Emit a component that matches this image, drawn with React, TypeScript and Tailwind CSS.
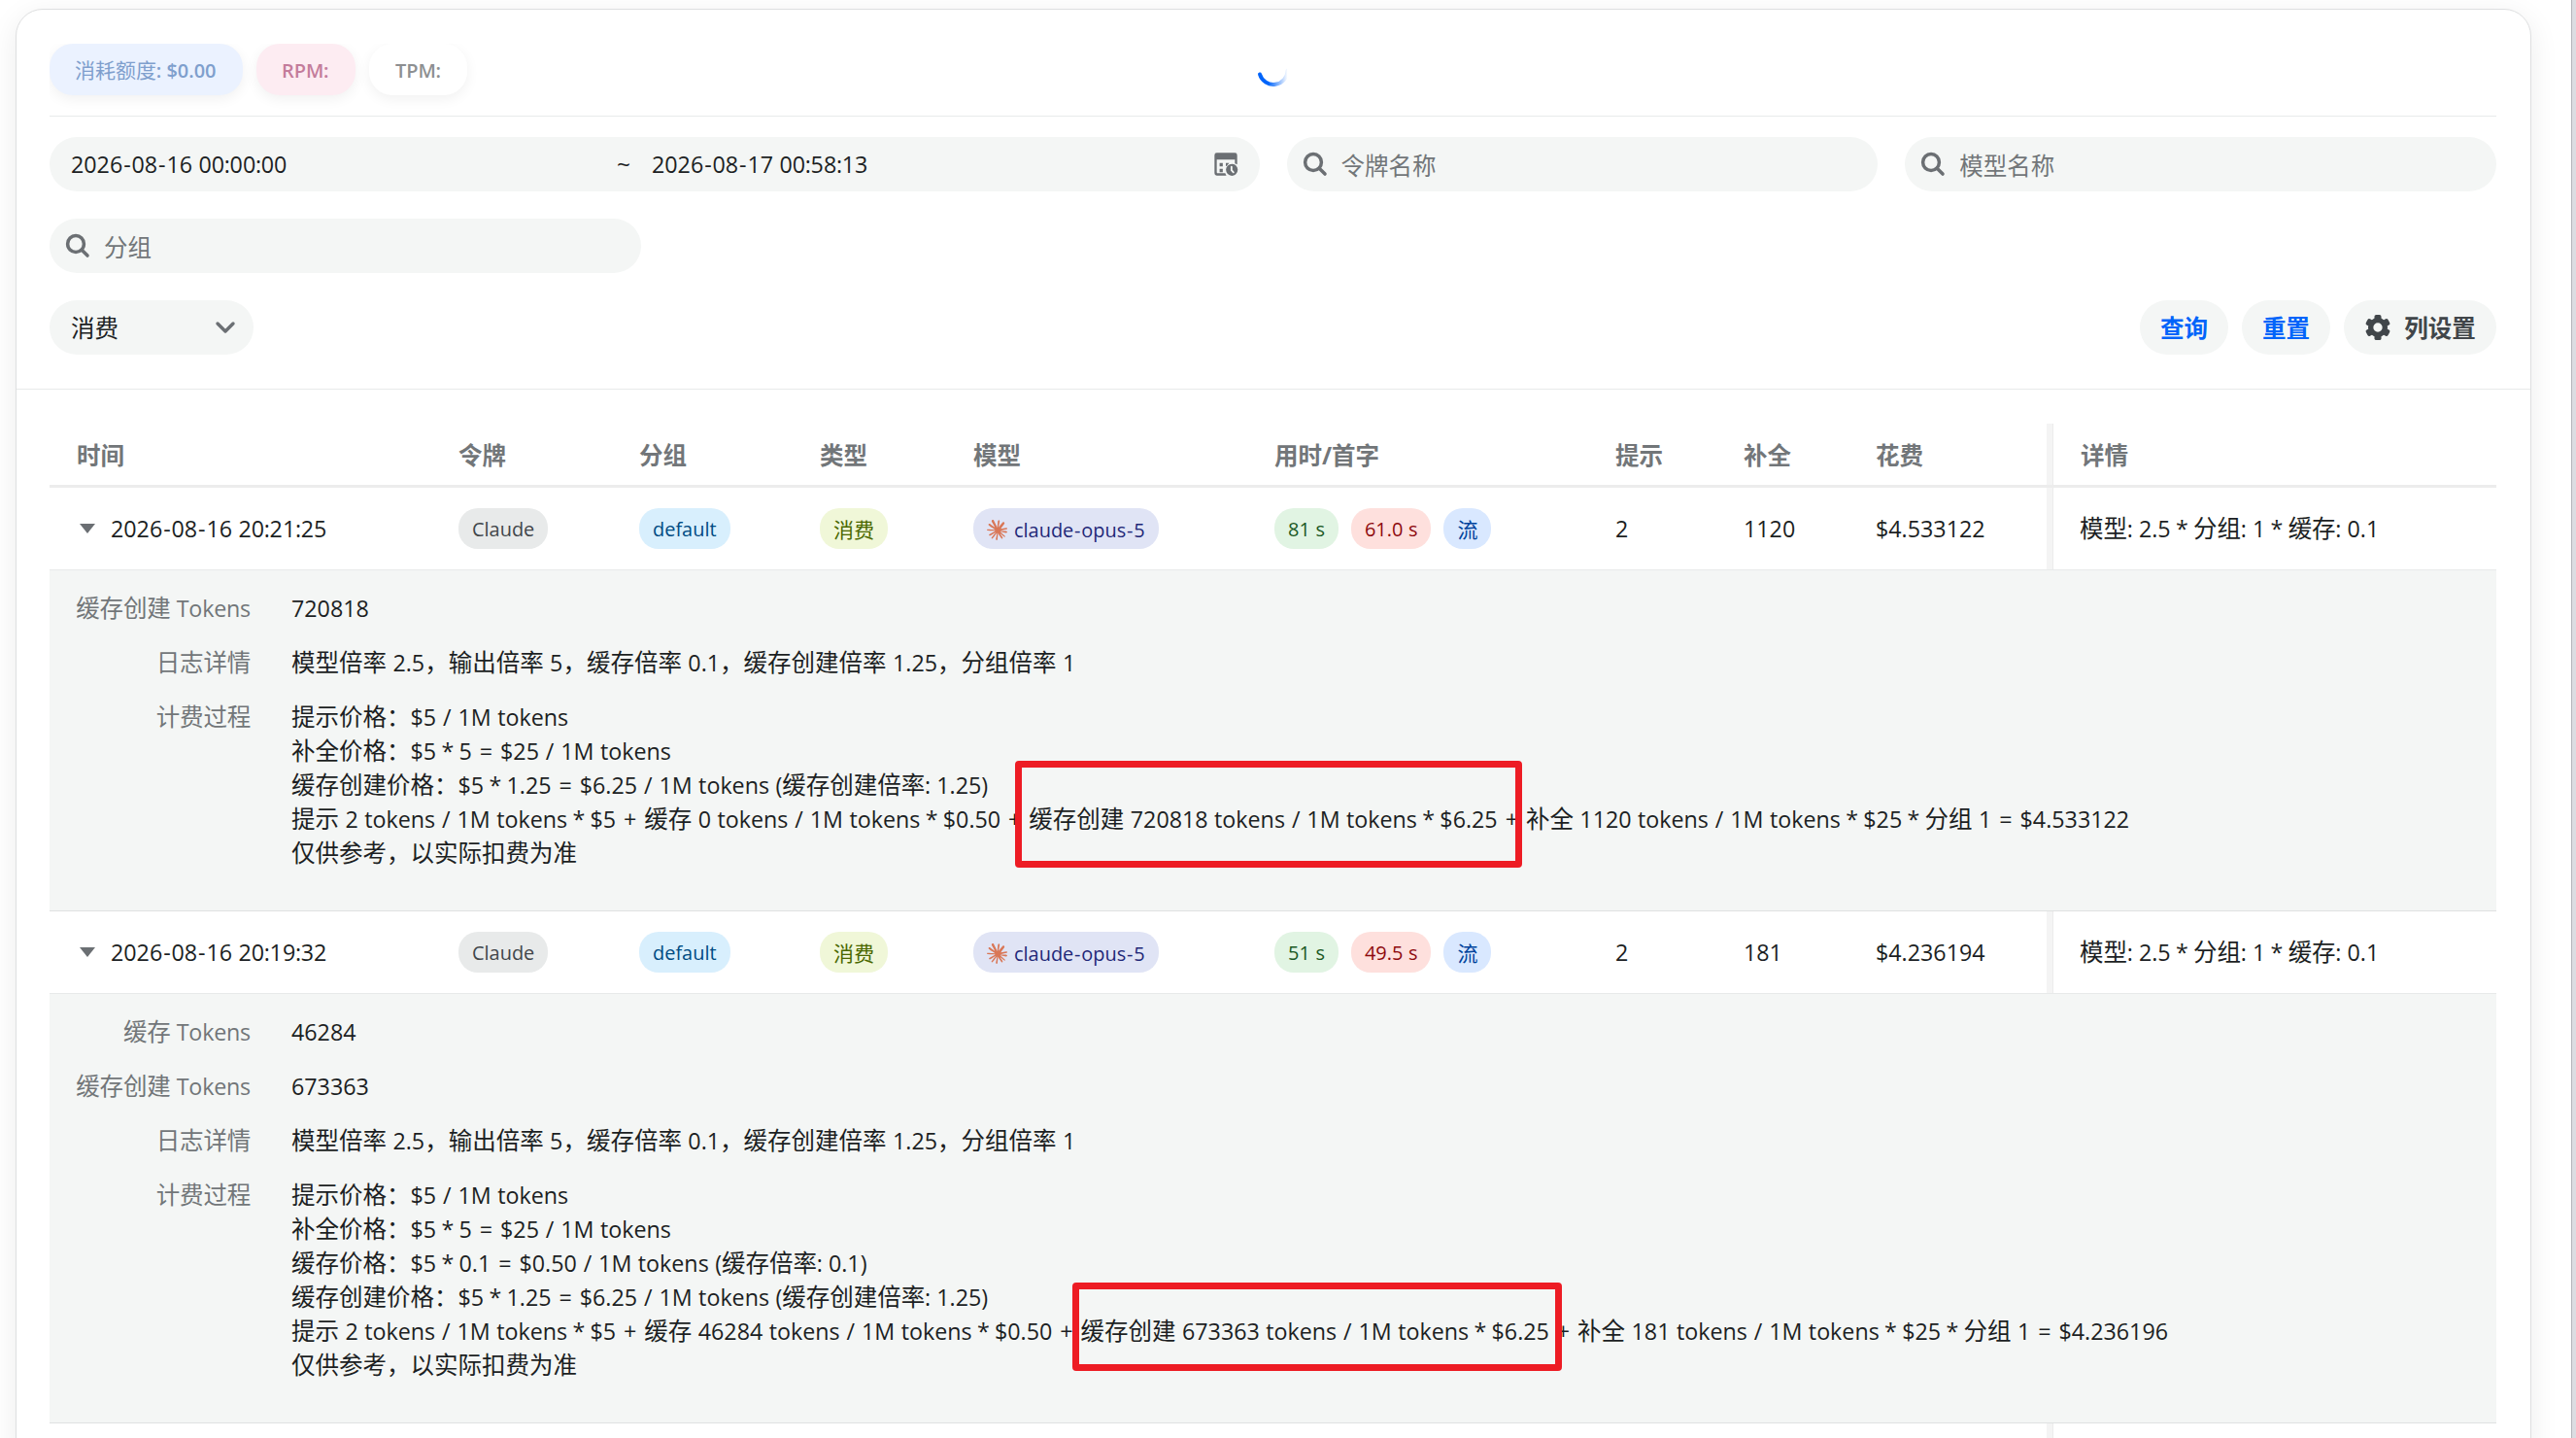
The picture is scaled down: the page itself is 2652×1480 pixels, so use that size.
import { Fragment } from "react"

const symbols: Record<string, string> = {
  "+": "px-[0.065em]",
  "=": "px-[0.065em]",
  "*": "-mx-[0.05em]",
  "-": "px-[0.04em]",
  "/": "px-[0.02em]",
  ":": "-mx-[0.015em]",
}

// Latin runs are set slightly smaller than the CJK glyphs around them,
// with the math symbols spaced on their own
function Txt({ children }: { children: string }) {
  const parts = children.split(/([\x20-\x7e]+)/).filter(Boolean)
  return (
    <>
      {parts.map((part, i) =>
        /^[\x20-\x7e]/.test(part) ? (
          <span key={i} className="text-[0.95em] leading-none whitespace-pre [word-spacing:0.4px]">
            {part.split(/([-+=*/:])/).map((s, j) =>
              symbols[s] ? <span key={j} className={symbols[s]}>{s}</span> : s
            )}
          </span>
        ) : (
          <Fragment key={i}>{part}</Fragment>
        )
      )}
    </>
  )
}

function SearchIcon() {
  return (
    <svg viewBox="0 0 24 24" className="size-7 shrink-0" fill="none" stroke="#6b6f73" strokeWidth="3" strokeLinecap="round">
      <circle cx="10.3" cy="10.3" r="7.2" />
      <path d="M15.6 15.6l5 5" />
    </svg>
  )
}

function CalendarIcon() {
  return (
    <svg viewBox="0 0 24 24" className="size-7">
      <path
        fill="#6b6f73"
        fillRule="evenodd"
        d="M4 2a2 2 0 0 0-2 2v16a2 2 0 0 0 2 2h8.500a7 7 0 0 1-1-2H5a1 1 0 0 1-1-1V8h16v3.300a7 7 0 0 1 2 1V4a2 2 0 0 0-2-2H4z"
      />
      <path fill="#6b6f73" d="M6.500 11h2.800v3H6.500zM6.500 16h2.800v3H6.500zM12 11h3l-2.500 2.800H12z" />
      <circle cx="17.300" cy="17" r="5.200" fill="#6b6f73" />
      <path d="M17 14.300v3l1.700 1.800" stroke="#f4f6f5" strokeWidth="1.600" fill="none" strokeLinecap="round" />
    </svg>
  )
}

function ClaudeIcon() {
  return (
    <svg viewBox="0 0 24 24" className="size-[21px] shrink-0" fill="#d97757">
      <path d="m4.7144 15.9555 4.7174-2.6471.079-.2307-.079-.1275h-.2307l-.7893-.0486-2.6956-.0729-2.3375-.0971-2.2646-.1214-.5707-.1215-.5343-.7042.0546-.3522.4797-.3218.686.0608 1.5179.1032 2.2767.1578 1.6514.0972 2.4468.255h.3886l.0546-.1579-.1336-.0971-.1032-.0972L6.973 9.8356l-2.55-1.6879-1.3356-.9714-.7225-.4918-.3643-.4614-.1578-1.0078.6557-.7225.8803.0607.2246.0607.8925.686 1.9064 1.4754 2.4893 1.8336.3643.3035.1457-.1032.0182-.0728-.164-.2733-1.3539-2.4467-1.445-2.4893-.6435-1.032-.17-.6194c-.0607-.255-.1032-.4674-.1032-.7285L6.287.1335 6.6997 0l.9957.1336.419.3642.6192 1.4147 1.0018 2.2282 1.5543 3.0296.4553.8985.2429.8318.091.255h.1579v-.1457l.1275-1.706.2368-2.0947.2307-2.6957.0789-.7589.3764-.9107.7468-.4918.5828.2793.4797.686-.0668.4433-.2853 1.8517-.5586 2.9021-.3643 1.9429h.2125l.2429-.2429.9835-1.3053 1.6514-2.0643.7286-.8196.85-.9046.5464-.4311h1.0321l.759 1.1293-.34 1.1657-1.0625 1.3478-.8804 1.1414-1.2628 1.7-.7893 1.36.0729.1093.1882-.0183 2.8535-.607 1.5421-.2794 1.8396-.3157.8318.3886.091.3946-.3278.8075-1.967.4857-2.3072.4614-3.4364.8136-.0425.0304.0486.0607 1.5482.1457.6618.0364h1.621l3.0175.2247.7892.522.4736.6376-.079.4857-1.2142.6193-1.6393-.3886-3.825-.9107-1.3113-.3279h-.1822v.1093l1.0929 1.0686 2.0035 1.8092 2.5075 2.3314.1275.5768-.3218.4554-.34-.0486-2.2039-1.6575-.85-.7468-1.9246-1.621h-.1275v.17l.4432.6496 2.3436 3.5214.1214 1.0807-.17.3521-.6071.2125-.6679-.1214-1.3721-1.9246L14.38 17.959l-1.1414-1.9428-.1397.079-.674 7.2552-.3156.3703-.7286.2793-.6071-.4614-.3218-.7468.3218-1.4753.3886-1.9246.3157-1.53.2853-1.9004.17-.6314-.0121-.0425-.1397.0182-1.4328 1.9672-2.1796 2.9446-1.7243 1.8456-.4128.164-.7164-.3704.0667-.6618.4008-.5889 2.386-3.0357 1.4389-1.882.929-1.0868-.0062-.1579h-.0546l-6.3385 4.1164-1.1293.1457-.4857-.4554.0608-.7467.2307-.2429 1.9064-1.3114Z" />
    </svg>
  )
}

function GearIcon() {
  return (
    <svg viewBox="0 0 24 24" className="size-7" fill="#41464a">
      <circle cx="12" cy="12" r="6.3" fill="none" stroke="#41464a" strokeWidth="4.600" />
      {[0, 60, 120, 180, 240, 300].map((deg) => (
        <rect key={deg} x="9" y="0.800" width="6" height="6" rx="1.600" transform={`rotate(${deg} 12 12)`} />
      ))}
    </svg>
  )
}

function Spinner() {
  return (
    <svg viewBox="0 0 36 36" className="size-9" fill="none">
      <defs>
        <linearGradient id="spin" x1="0" x2="1" y1="0" y2="0">
          <stop offset="0.3" stopColor="#0064fa" />
          <stop offset="1" stopColor="#0064fa" stopOpacity="0" />
        </linearGradient>
      </defs>
      <path d="M4 21.500A14.600 14.600 0 0 0 32.600 17.500" stroke="url(#spin)" strokeWidth="4" strokeLinecap="round" />
    </svg>
  )
}

function SearchInput({ placeholder }: { placeholder: string }) {
  return (
    <div className="flex h-14 items-center gap-[13px] rounded-full bg-[#f4f6f5] pl-[15px] text-[#727679]">
      <SearchIcon />
      <span className="pt-[2px]">{placeholder}</span>
    </div>
  )
}

function Tag({ tone, children }: { tone: string; children: React.ReactNode }) {
  return (
    <span className={`flex h-[42px] shrink-0 items-center gap-[7px] rounded-[20px] px-[14px] pt-[2px] text-[21px] whitespace-nowrap ${tone}`}>
      {children}
    </span>
  )
}

const cols = "grid grid-cols-[393px_186px_186px_158px_310px_351px_132px_136px_210px_457px]"

const headers = ["时间", "令牌", "分组", "类型", "模型", "用时/首字", "提示", "补全", "花费", "详情"]

type Log = {
  time: string
  total: string
  first: string
  prompt: string
  completion: string
  cost: string
  details: { label: string; lines: string[] }[]
  mark: string
}

const logs: Log[] = [
  {
    time: "2026-08-16 20:21:25",
    total: "81 s",
    first: "61.0 s",
    prompt: "2",
    completion: "1120",
    cost: "$4.533122",
    details: [
      { label: "缓存创建 Tokens", lines: ["720818"] },
      { label: "日志详情", lines: ["模型倍率 2.5，输出倍率 5，缓存倍率 0.1，缓存创建倍率 1.25，分组倍率 1"] },
      {
        label: "计费过程",
        lines: [
          "提示价格：$5 / 1M tokens",
          "补全价格：$5 * 5 = $25 / 1M tokens",
          "缓存创建价格：$5 * 1.25 = $6.25 / 1M tokens (缓存创建倍率: 1.25)",
          "提示 2 tokens / 1M tokens * $5 + 缓存 0 tokens / 1M tokens * $0.50 + 缓存创建 720818 tokens / 1M tokens * $6.25 + 补全 1120 tokens / 1M tokens * $25 * 分组 1 = $4.533122",
          "仅供参考，以实际扣费为准",
        ],
      },
    ],
    mark: "left-[994px] top-[196px] w-[522px] h-[110px]",
  },
  {
    time: "2026-08-16 20:19:32",
    total: "51 s",
    first: "49.5 s",
    prompt: "2",
    completion: "181",
    cost: "$4.236194",
    details: [
      { label: "缓存 Tokens", lines: ["46284"] },
      { label: "缓存创建 Tokens", lines: ["673363"] },
      { label: "日志详情", lines: ["模型倍率 2.5，输出倍率 5，缓存倍率 0.1，缓存创建倍率 1.25，分组倍率 1"] },
      {
        label: "计费过程",
        lines: [
          "提示价格：$5 / 1M tokens",
          "补全价格：$5 * 5 = $25 / 1M tokens",
          "缓存价格：$5 * 0.1 = $0.50 / 1M tokens (缓存倍率: 0.1)",
          "缓存创建价格：$5 * 1.25 = $6.25 / 1M tokens (缓存创建倍率: 1.25)",
          "提示 2 tokens / 1M tokens * $5 + 缓存 46284 tokens / 1M tokens * $0.50 + 缓存创建 673363 tokens / 1M tokens * $6.25 + 补全 181 tokens / 1M tokens * $25 * 分组 1 = $4.236196",
          "仅供参考，以实际扣费为准",
        ],
      },
    ],
    mark: "left-[1053px] top-[297px] w-[504px] h-[91px]",
  },
]

function LogRow({ log }: { log: Log }) {
  return (
    <>
      <div className={`${cols} h-[85px] border-b border-[#e8eaea] *:flex *:items-center *:pl-7 [&>div>p]:pb-px`}>
        <div>
          <span className="ml-[3px] mr-4 h-[10px] w-4 bg-[#6b6f73] [clip-path:polygon(0_0,100%_0,50%_100%)]" />
          <p><Txt>{log.time}</Txt></p>
        </div>
        <div><Tag tone="bg-[#e8eaea] text-[#41464a]"><Txt>Claude</Txt></Tag></div>
        <div><Tag tone="bg-[#d8effd] text-[#004b83]"><Txt>default</Txt></Tag></div>
        <div><Tag tone="bg-[#f0f7d8] text-[#4a6800]">消费</Tag></div>
        <div>
          <Tag tone="bg-[#e0e4f5] text-[#1f2878]">
            <ClaudeIcon />
            <p><Txt>claude-opus-5</Txt></p>
          </Tag>
        </div>
        <div className="gap-[13px]">
          <Tag tone="bg-[#e1f4e3] text-[#1b5924]"><Txt>{log.total}</Txt></Tag>
          <Tag tone="bg-[#fee0dd] text-[#8e0a0e]"><Txt>{log.first}</Txt></Tag>
          <Tag tone="bg-[#d9e8ff] text-[#00439c]">流</Tag>
        </div>
        <div><p><Txt>{log.prompt}</Txt></p></div>
        <div><p><Txt>{log.completion}</Txt></p></div>
        <div className="border-r-[6px] border-[#f4f4f4]"><p><Txt>{log.cost}</Txt></p></div>
        <div className="border-l border-[#ebebeb]"><p className="-ml-px"><Txt>模型: 2.5 * 分组: 1 * 缓存: 0.1</Txt></p></div>
      </div>
      <div className="relative border-b border-[#dfe1e1] bg-[#f4f6f5] px-7 pt-[21px] pb-[21px]">
        {log.details.map((item) => (
          <div key={item.label} className="flex gap-[42px] pb-[21px]">
            <div className="flex w-[179px] justify-end tracking-[-0.2px] whitespace-nowrap text-[#727679]"><p><Txt>{item.label}</Txt></p></div>
            <div>
              {item.lines.map((line) => (
                <p key={line} className="h-[35px] whitespace-nowrap"><Txt>{line}</Txt></p>
              ))}
            </div>
          </div>
        ))}
        <div className={`absolute rounded-[4px] border-[7px] border-[#ed1c24] ${log.mark}`} />
      </div>
    </>
  )
}

export default function App() {
  return (
    <div className="flex h-[1480px] w-[2652px] overflow-hidden bg-white font-['Open_Sans','Noto_Sans_CJK_SC',sans-serif] text-[24.5px] leading-[35px] text-[#1c1f23]">
      <main className="mt-[9px] ml-4 h-[1500px] w-[2590px] shrink-0 rounded-[28px] border border-[#dedfe0] bg-white shadow-[0_7px_30px_rgba(0,0,0,0.08)]">
        <section className="border-b border-[#e8eaea] pr-[35px] pl-[34px] pt-[35px] pb-[35px]">
          <div className="grid h-[75px] grid-cols-[1fr_auto_1fr] items-start overflow-hidden border-b border-[#e8eaea]">
            <div className="flex gap-[14px] text-[21px] *:flex *:h-[53px] *:items-center *:rounded-[24px] *:pt-px *:shadow-[0_4px_14px_rgba(0,0,0,0.06)] [&_span]:font-semibold">
              <div className="w-[199px] pl-[26px] bg-[#ebf2ff] text-[#7f9fcd]"><p><Txt>消耗额度: $0.00</Txt></p></div>
              <div className="w-[102px] pl-[26px] bg-[#fdecf2] text-[#c47c9b]"><p><Txt>RPM:</Txt></p></div>
              <div className="w-[101px] pl-[27px] bg-white text-[#8d8f91]"><p><Txt>TPM:</Txt></p></div>
            </div>
            <div className="pt-[10px] pl-px"><Spinner /></div>
          </div>
          <div className="mt-[21px] grid grid-cols-4 gap-7">
            <div className="col-span-2 flex h-14 items-center rounded-full bg-[#f4f6f5] pr-[21px] pl-[22px] *:[span]:pb-[2px]">
              <span className="w-[562px]"><Txt>2026-08-16 00:00:00</Txt></span>
              <span className="w-[36px]">~</span>
              <span className="flex-1"><Txt>2026-08-17 00:58:13</Txt></span>
              <CalendarIcon />
            </div>
            <SearchInput placeholder="令牌名称" />
            <SearchInput placeholder="模型名称" />
            <SearchInput placeholder="分组" />
          </div>
          <div className="mt-7 flex items-center justify-between">
            <div className="flex h-14 w-[210px] items-center justify-between rounded-full bg-[#f4f6f5] pr-[17px] pl-[22px]">
              消费
              <svg viewBox="0 0 24 24" className="size-6" fill="none" stroke="#6b6f73" strokeWidth="3.4" strokeLinecap="round" strokeLinejoin="round">
                <path d="M4 8l8 8 8-8" />
              </svg>
            </div>
            <div className="flex gap-[14px] font-bold *:flex *:h-14 *:items-center *:justify-center *:rounded-full *:bg-[#f4f6f5]">
              <button className="w-[91px] text-[#0064fa]">查询</button>
              <button className="w-[91px] text-[#0064fa]">重置</button>
              <button className="w-[157px] gap-[13px] text-[#41464a]">
                <GearIcon />
                列设置
              </button>
            </div>
          </div>
        </section>
        <section className="pr-[35px] pl-[34px] pt-[35px]">
          <div className={`${cols} h-[66px] border-b-[3px] border-[#ececec] font-bold text-[#727679] *:flex *:items-center *:pt-px *:pl-7`}>
            {headers.map((h) => (
              <div
                key={h}
                className="nth-9:border-r-[6px] nth-9:border-[#f4f4f4] nth-10:border-l nth-10:border-[#ebebeb]"
              >
                {h}
              </div>
            ))}
          </div>
          {logs.map((log) => (
            <LogRow key={log.time} log={log} />
          ))}
          <div className={`${cols} h-[85px]`}>
            <div className="col-start-9 border-r-[6px] border-[#f4f4f4]" />
            <div className="border-l border-[#ebebeb]" />
          </div>
        </section>
      </main>
      <aside className="ml-auto h-full w-[5px] border-l border-[#b4b5ba] bg-[#dcdde2]" />
    </div>
  )
}
